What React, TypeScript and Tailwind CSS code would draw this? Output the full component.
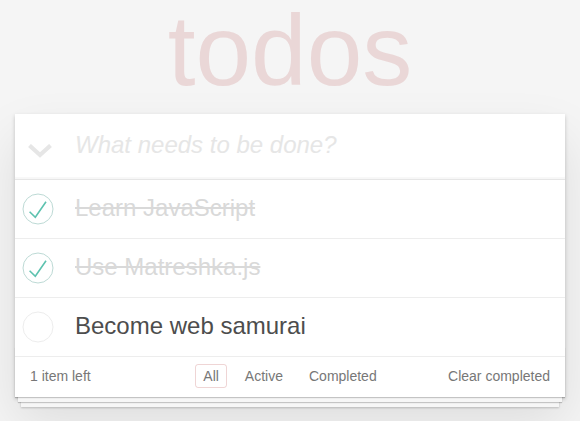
import React from "react";

const Check = ({ done }: { done: boolean }) => (
  <svg width="32" height="32" viewBox="0 0 32 32" className="shrink-0">
    <circle cx="16" cy="16" r="15" fill="none" stroke={done ? "#bddad5" : "#ededed"} strokeWidth="1" />
    {done && (
      <polyline points="7.6,18.7 13.3,24.3 24,8.7" fill="none" stroke="#5dc2af" strokeWidth="1.6" />
    )}
  </svg>
);

const todos = [
  { title: "Learn JavaScript", done: true },
  { title: "Use Matreshka.js", done: true },
  { title: "Become web samurai", done: false },
];

export default function App() {
  return (
    <div
      className="min-h-[421px] bg-[#f5f5f5] px-[15px] text-[#4d4d4d]"
      style={{ fontFamily: '"Liberation Sans", Arial, sans-serif' }}
    >
      <h1 className="h-[114px] pt-[5px] text-center text-[100px] leading-[90px] font-thin text-[rgba(175,47,47,0.15)]">
        todos
      </h1>
      <section className="relative bg-white shadow-[0_2px_4px_0_rgba(0,0,0,0.2),0_25px_50px_0_rgba(0,0,0,0.1)]">
        <div className="relative flex h-[65px] items-center shadow-[inset_0_-2px_1px_rgba(0,0,0,0.03)]">
          <svg width="24" height="15" viewBox="0 0 24 15" className="absolute left-[13px] top-[30px]">
            <polyline points="1.5,1.5 12,11 22.5,1.5" fill="none" stroke="#e6e6e6" strokeWidth="4.2" />
          </svg>
          <input
            className="h-full w-full bg-transparent pl-[60px] pr-4 pb-[3px] text-[24px] outline-none placeholder:italic placeholder:text-[#e6e6e6]"
            placeholder="What needs to be done?"
          />
        </div>
        <ul className="border-t border-[#e6e6e6]">
          {todos.map((t) => (
            <li key={t.title} className="flex h-[59px] items-center border-b border-[#ededed] pl-[7px]">
              <Check done={t.done} />
              <span
                className={
                  "ml-[21px] pb-[4px] text-[24px] leading-[29px] " +
                  (t.done ? "text-[#d9d9d9] line-through" : "text-[#4d4d4d]")
                }
              >
                {t.title}
              </span>
            </li>
          ))}
        </ul>
        <footer className="relative flex h-[40px] items-center px-[15px] pb-[2px] text-[14px] text-[#777]">
          <div className="pointer-events-none absolute bottom-0 left-0 right-0 h-[50px] shadow-[0_1px_1px_rgba(0,0,0,0.2),0_8px_0_-3px_#f6f6f6,0_9px_1px_-3px_rgba(0,0,0,0.2),0_16px_0_-6px_#f6f6f6,0_17px_2px_-6px_rgba(0,0,0,0.2)]" />
          <span className="relative">1 item left</span>
          <ul className="absolute left-0 right-0 flex justify-center gap-[4px]">
            <li className="m-[3px] rounded-[3px] border border-[rgba(175,47,47,0.2)] px-[7px] py-[3px] leading-[16px]">All</li>
            <li className="m-[3px] rounded-[3px] border border-transparent px-[7px] py-[3px] leading-[16px]">Active</li>
            <li className="m-[3px] rounded-[3px] border border-transparent px-[7px] py-[3px] leading-[16px]">Completed</li>
          </ul>
          <span className="relative ml-auto">Clear completed</span>
        </footer>
      </section>
    </div>
  );
}
